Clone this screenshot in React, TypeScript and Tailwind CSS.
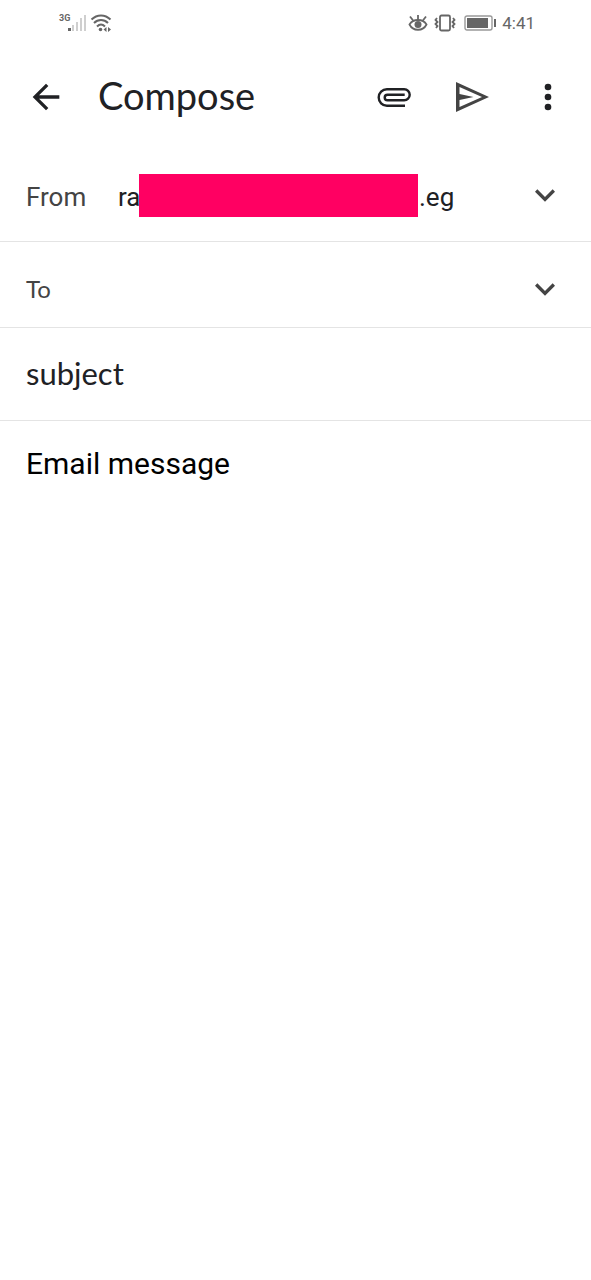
import { useState } from "react";
import type { ReactNode } from "react";

const Icon = ({ viewBox = "0 0 24 24", children }: { viewBox?: string; children: ReactNode }) => (
    <svg viewBox={viewBox} className="size-10" fill="currentColor" aria-hidden="true">
        {children}
    </svg>
);

const StatusBar = () => {
    return (
        <div className="flex h-[45px] items-center justify-between pr-[56px] pl-[59px] text-[#666666]">
            <div className="flex">
                <span className="w-[9px] text-[9px] leading-[10px] font-bold">3G</span>
                <svg viewBox="9 0 44 20" className="h-5 w-11" aria-hidden="true">
                    <rect x="9" y="15" width="3" height="3" fill="#666666" />
                    <g fill="#cfcfcf">
                        <rect x="13" y="12" width="2" height="6" />
                        <rect x="17" y="9" width="2" height="9" />
                        <rect x="21" y="5" width="2" height="13" />
                        <rect x="25" y="2" width="2" height="16" />
                    </g>
                    <g fill="none" stroke="#666666" strokeWidth="2">
                        <path d="M32.500 6.500C38 1 46 1 51.500 6.500" />
                        <path d="M35 10C39 6 45 6 49 10" />
                        <path d="M38 13.500C40.500 11 43.500 11 46 13.500" />
                    </g>
                    <circle cx="41.500" cy="16.500" r="1.800" fill="#666666" />
                    <path d="M44.500 16.500L47.500 14V19ZM52 16.500L49 14V19Z" fill="#666666" />
                </svg>
            </div>
            <div className="flex items-center gap-[6px]">
                <svg viewBox="0 0 20 20" className="size-5" fill="none" stroke="currentColor" strokeWidth="1.8" aria-hidden="true">
                    <path d="M1.500 11.500C5 5.500 15 5.500 18.500 11.500C15 18.500 5 18.500 1.500 11.500Z" />
                    <circle cx="10" cy="11.500" r="3.500" fill="currentColor" stroke="none" />
                    <path d="M10 7V2M5.500 8L2 3.500M14.500 8L18 3.500" />
                </svg>
                <svg viewBox="0 0 22 20" className="h-5 w-[22px]" fill="none" stroke="currentColor" strokeWidth="1.8" aria-hidden="true">
                    <rect x="6" y="2.500" width="10" height="15" rx="1.500" />
                    <path d="M3 5L1.500 7L3.500 9L1.500 11L3.500 13L2 15M19 5L20.500 7L18.500 9L20.500 11L18.500 13L20 15" />
                </svg>
                <svg viewBox="0 0 32 16" className="ml-[2px] h-4 w-8" fill="none" aria-hidden="true">
                    <rect x="1" y="1" width="27" height="14" rx="2" stroke="#999999" strokeWidth="1.400" />
                    <rect x="3" y="3" width="21" height="10" fill="#666666" />
                    <rect x="30" y="4" width="2" height="8" fill="#666666" />
                </svg>
                <span className="text-[17px] leading-5">4:41</span>
            </div>
        </div>
    );
};

const ExpandButton = ({ label }: { label: string }) => (
    <button type="button" aria-label={label} className="ml-auto shrink-0 text-[#444444]">
        <Icon>
            <path d="M16.590 8.590L12 13.170 7.410 8.590 6 10l6 6 6-6z" />
        </Icon>
    </button>
);

const App = () => {
    const [to, setTo] = useState("");
    const [subject, setSubject] = useState("subject");
    const [message, setMessage] = useState("Email message");

    return (
        <div className="flex min-h-screen flex-col bg-white font-['Roboto',sans-serif] text-[#202124]">
            <StatusBar />
            <header className="flex h-[104px] items-center pr-[23px] pl-[26px]">
                <button type="button" aria-label="Back">
                    <Icon>
                        <path d="M20 11H7.830l5.590-5.590L12 4l-8 8 8 8 1.410-1.410L7.830 13H20v-2z" />
                    </Icon>
                </button>
                <h1 className="ml-8 pb-1 font-['Lato',sans-serif] text-[38px] leading-10">Compose</h1>
                <div className="ml-auto flex gap-[37px]">
                    <button type="button" aria-label="Attach file">
                        <Icon viewBox="0 0 40 40">
                            <path
                                d="M31 28.700H12.900A8.200 8.200 0 0 1 12.900 12.300H30.200A5.500 5.500 0 0 1 30.200 23.300H13.500A2.800 2.800 0 0 1 13.500 17.700H30.700"
                                fill="none"
                                stroke="currentColor"
                                strokeWidth="2.400"
                            />
                        </Icon>
                    </button>
                    <button type="button" aria-label="Send" className="text-[#444444]">
                        <Icon viewBox="0 0 40 40">
                            <path fillRule="evenodd" d="M5 5L38 20L5 35ZM8.500 10V17L22.500 20L8.500 23V30L31 20Z" />
                        </Icon>
                    </button>
                    <button type="button" aria-label="More options">
                        <Icon>
                            <circle cx="12" cy="6" r="2" />
                            <circle cx="12" cy="12" r="2" />
                            <circle cx="12" cy="18" r="2" />
                        </Icon>
                    </button>
                </div>
            </header>

            <main className="flex grow flex-col">
                <div className="flex h-[93px] items-center border-b border-[#e4e4e4] px-[26px]">
                    <span className="w-[92px] shrink-0 pt-1 text-[26px] leading-8 text-[#444444]">From</span>
                    <div className="flex min-w-0 items-center text-[26px] leading-8">
                        <span className="w-[21px] shrink-0 pt-1">ra</span>
                        <span className="h-[43px] w-[279px] bg-[#ff0062]"></span>
                        <span className="pt-1 pl-px">.eg</span>
                    </div>
                    <ExpandButton label="Choose sender" />
                </div>
                <div className="flex h-[86px] items-center border-b border-[#e4e4e4] px-[26px] pt-2">
                    <label htmlFor="to" className="w-[92px] shrink-0 font-['Lato',sans-serif] text-[24px] leading-8 text-[#444444]">To</label>
                    <input id="to" type="email" value={to} onChange={(e) => setTo(e.target.value)} className="min-w-0 grow text-[26px] leading-8 outline-none" />
                    <ExpandButton label="Add Cc and Bcc" />
                </div>
                <div className="flex h-[93px] items-center border-b border-[#e4e4e4] px-[26px] pb-[2px]">
                    <input aria-label="Subject" value={subject} onChange={(e) => setSubject(e.target.value)} className="min-w-0 grow font-['Lato',sans-serif] text-[31px] leading-10 outline-none" />
                </div>
                <textarea aria-label="Email message" value={message} onChange={(e) => setMessage(e.target.value)} className="grow resize-none px-[26px] pt-[23px] text-[30px] leading-10 text-black outline-none" />
            </main>
        </div>
    );
};

export default App;
